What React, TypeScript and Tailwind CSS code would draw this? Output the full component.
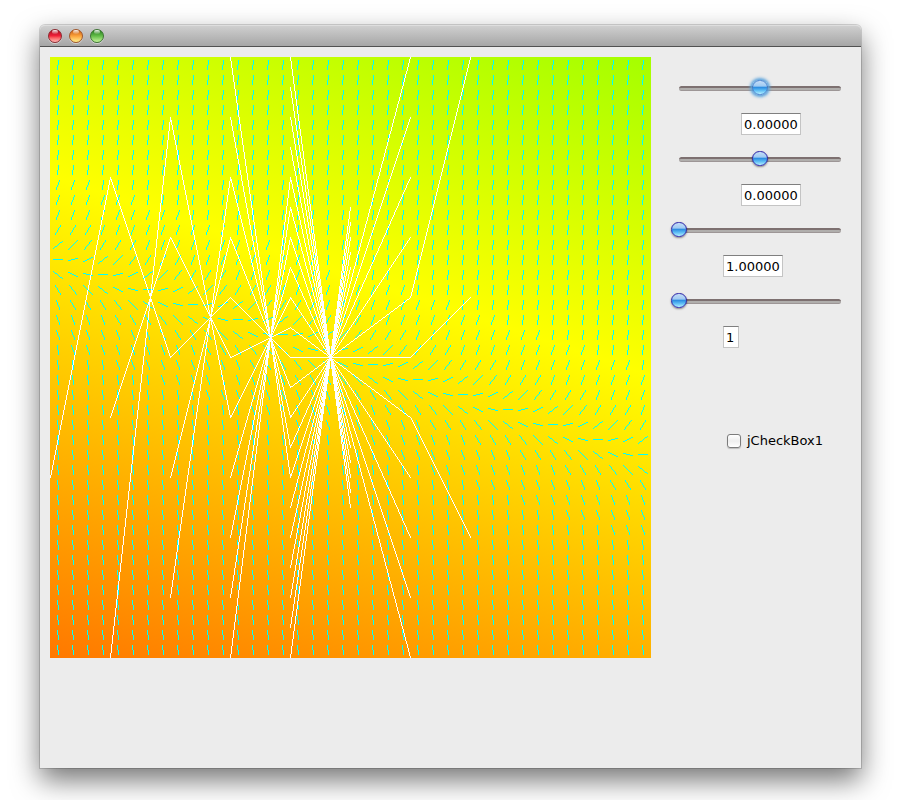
import React, { useState } from "react";

const PLOT = 601;
const ARROWS = 40;
const PITCH = 15;

/** Pixel runs of the direction field, as one path of unit rectangles. */
function fieldPath(): string {
  let d = "";
  for (let i = 0; i < ARROWS; i++) {
    for (let j = 0; j < ARROWS; j++) {
      const cx = 8 + PITCH * i;
      const cy = 8 + PITCH * j;
      const n = 3 * (13 - j) + i;
      const up = n > 0;
      const a = Math.abs(n);
      if (a === 0) {
        d += `M${cx - 5} ${cy - 1}h10v1h-10z`;
        continue;
      }
      if (a < 4) {
        const h = a === 1 ? 3 : a === 2 ? 5 : 8;
        const top = cy - Math.ceil(h / 2);
        for (let c = 0; c < 10; c++) {
          const r = Math.floor(((c + 0.5) * h) / 10);
          const y = up ? top + h - 1 - r : top + r;
          d += `M${cx - 5 + c} ${y}h1v1h-1z`;
        }
        continue;
      }
      const half = a >= 18 ? 1 : Math.max(2, Math.round(20 / a));
      const w = 2 * half;
      for (let r = 0; r < 10; r++) {
        const c = Math.floor(((r + 0.5) * w) / 10);
        const x = up ? cx + half - 1 - c : cx - half + c;
        d += `M${x} ${cy - 5 + r}h1v1h-1z`;
      }
    }
  }
  return d;
}

const range = (from: number, to: number, step: number) => {
  const out: number[] = [];
  for (let v = from; v <= to; v += step) out.push(v);
  return out;
};

/** Step segments of the approximate solutions: [x0, y0, x1, y1]. */
function solutionSegments(): number[][] {
  const fan = (x: number, focus: number, ys: number[]) =>
    ys.map((y) => [x, y, x + 60, 1.5 * focus - 0.5 * y]);
  return [
    ...fan(0, 220, [420]),
    ...fan(60, 240, [120, 360, 600]),
    ...fan(120, 260, [60, 180, 300, 420, 540]),
    ...fan(180, 280, range(0, 600, 60)),
    ...fan(240, 300, range(0, 600, 30)),
    ...range(150, 450, 30).map((y) => [240, y, 360, 900 - 2 * y]),
    [360, 240, 420, 0],
    [360, 300, 420, 240],
    [360, 360, 420, 480],
  ];
}

/** One-pixel line without antialiasing, stepping along the longer axis. */
function pixelLine([x0, y0, x1, y1]: number[]): string {
  const dx = x1 - x0;
  const dy = y1 - y0;
  const steps = Math.max(Math.abs(dx), Math.abs(dy));
  let d = "";
  for (let s = 0; s <= steps; s++) {
    const x = Math.round(x0 + (dx * s) / steps);
    const y = Math.round(y0 + (dy * s) / steps);
    d += `M${x} ${y}h1v1h-1z`;
  }
  return d;
}

const FIELD = fieldPath();
const SOLUTIONS = solutionSegments().map(pixelLine).join("");

function SlopeField() {
  return (
    <svg
      role="img"
      aria-label="Slope field"
      viewBox={`0 0 ${PLOT} ${PLOT}`}
      className="block w-[601px] shrink-0 self-start"
    >
      <defs>
        <linearGradient id="heat" gradientUnits="userSpaceOnUse" x1="0" y1="601" x2="240.6" y2="-120.8">
          <stop offset="0" stopColor="#ff7800" />
          <stop offset="0.602" stopColor="#ffff00" />
          <stop offset="1" stopColor="#a4ff00" />
        </linearGradient>
      </defs>
      <rect width={PLOT} height={PLOT} fill="url(#heat)" />
      <path d={FIELD} fill="#00ffff" shapeRendering="crispEdges" />
      <path d={SOLUTIONS} fill="#ffffff" shapeRendering="crispEdges" />
    </svg>
  );
}

function Slider({ label, value, focused }: { label: string; value: number; focused?: boolean }) {
  const [v, setV] = useState(value);
  const glow = focused
    ? "[&::-webkit-slider-thumb]:border-[#3f7fd0] [&::-webkit-slider-thumb]:shadow-[0_0_3px_2px_#5ba3dc]"
    : "[&::-webkit-slider-thumb]:border-[#2a22a8] [&::-webkit-slider-thumb]:shadow-[0_1px_2px_rgba(0,0,0,0.45)]";
  return (
    <div className="flex h-[5px] items-center rounded-full border-t-2 border-b border-t-[#7d7070] border-b-[#9d9696] bg-[#b0aeac]">
      <input
        type="range"
        aria-label={label}
        min={0}
        max={100}
        value={v}
        onChange={(e) => setV(Number(e.target.value))}
        className={`-mx-2 h-4 min-w-0 flex-1 -translate-y-[2px] cursor-default appearance-none bg-transparent outline-none [&::-webkit-slider-thumb]:h-[15px] [&::-webkit-slider-thumb]:w-4 [&::-webkit-slider-thumb]:appearance-none [&::-webkit-slider-thumb]:rounded-full [&::-webkit-slider-thumb]:border [&::-webkit-slider-thumb]:bg-[linear-gradient(180deg,#c4dcf6_0%,#a0cbf3_38%,#2f8fe2_50%,#5cbcf4_72%,#b4f0ff_100%)] ${glow}`}
      />
    </div>
  );
}

function Field({ label, value, className }: { label: string; value: string; className: string }) {
  return (
    <input
      type="text"
      aria-label={label}
      defaultValue={value}
      className={`block h-[22px] border border-[#c4c4c4] border-t-[#7f7f7f] bg-white px-[2px] text-[13px] leading-5 text-black outline-none ${className}`}
    />
  );
}

function TitleButton({ label, tone }: { label: string; tone: string }) {
  return (
    <button
      type="button"
      aria-label={label}
      className={`relative h-[14px] w-[14px] rounded-full border ${tone} shadow-[0_1px_0_rgba(255,255,255,0.45)]`}
    >
      <span className="absolute top-0 left-[3px] h-[4px] w-[6px] rounded-full bg-linear-to-b from-white/90 to-white/10" />
    </button>
  );
}

export default function App() {
  const [checked, setChecked] = useState(false);
  return (
    <div className="flex min-h-screen flex-col overflow-hidden bg-white px-10 pt-[25px] pb-8 font-['DejaVu_Sans','Noto_Sans',sans-serif]">
      <main className="flex flex-1 flex-col rounded-t-[5px] bg-[#ececec] shadow-[0_0_0_1px_rgba(0,0,0,0.15),0_12px_28px_rgba(0,0,0,0.55)]">
        <header className="flex h-[22px] items-center gap-[7px] rounded-t-[5px] border-t border-b border-t-[#dedede] border-b-[#515151] bg-linear-to-b from-[#cfcfcf] to-[#a6a6a6] pl-2">
          <TitleButton label="Close" tone="border-[#8c2a30] bg-linear-to-b from-[#a80f20] via-[#f2203a] to-[#ffb4b4]" />
          <TitleButton label="Minimize" tone="border-[#a0562a] bg-linear-to-b from-[#c65a10] via-[#fba23a] to-[#fff08a]" />
          <TitleButton label="Zoom" tone="border-[#3c7433] bg-linear-to-b from-[#237a1c] via-[#62bd48] to-[#c4f59a]" />
        </header>
        <div className="flex flex-1 gap-7 pt-[10px] pr-5 pl-[10px]">
          <SlopeField />
          <section className="flex min-w-0 flex-1 flex-col gap-[22px] pt-[29px]">
            <Slider label="First parameter" value={50} focused />
            <Field label="First parameter value" value="0.00000" className="ml-[62px] w-[60px]" />
            <Slider label="Second parameter" value={50} />
            <Field label="Second parameter value" value="0.00000" className="ml-[62px] w-[60px]" />
            <Slider label="Third parameter" value={0} />
            <Field label="Third parameter value" value="1.00000" className="ml-11 w-[60px]" />
            <Slider label="Step count" value={0} />
            <Field label="Step count value" value="1" className="ml-11 w-4" />
            <label className="mt-[61px] ml-12 flex items-center gap-[6px] text-[13px] leading-5 text-black">
              <input
                type="checkbox"
                checked={checked}
                onChange={(e) => setChecked(e.target.checked)}
                className="h-[14px] w-[14px] appearance-none rounded-[3px] border border-[#7c7c7c] bg-linear-to-b from-white via-[#eeeeee] to-white shadow-[0_1px_1px_rgba(0,0,0,0.2)] checked:bg-[#6cb4f0]"
              />
              jCheckBox1
            </label>
          </section>
        </div>
      </main>
    </div>
  );
}
